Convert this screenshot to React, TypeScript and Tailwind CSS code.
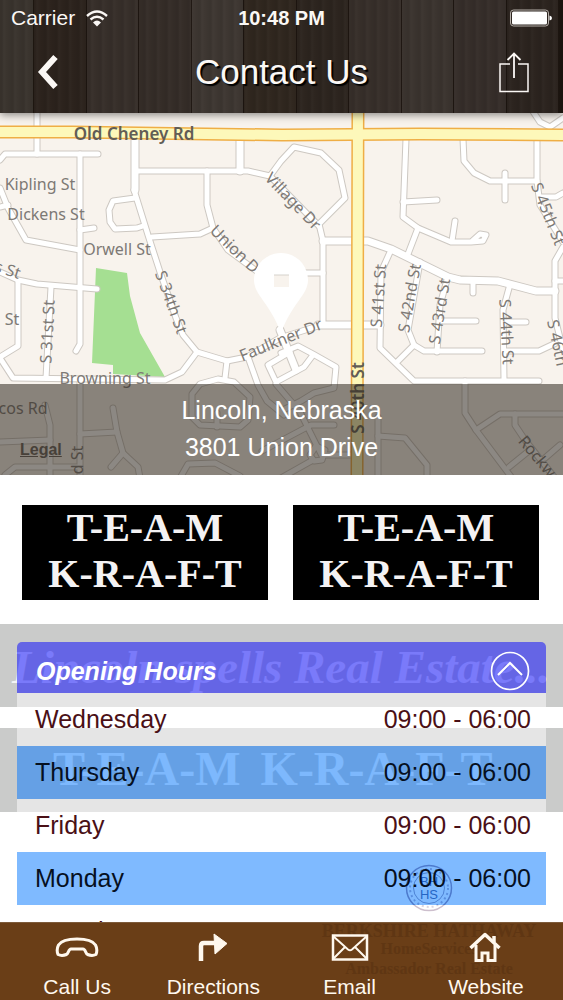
import { useState } from "react";

const planks = [
  "bg-[#2c231d]",
  "bg-[#372f2a]",
  "bg-[#352d28]",
  "bg-[#3e3732]",
  "bg-[#30271f]",
  "bg-[#2d251f]",
  "bg-[#372f2a]",
  "bg-[#3b342f]",
  "bg-[#362e2a]",
  "bg-[#2c241f]",
];

const hours = [
  { day: "Wednesday", time: "09:00 - 06:00" },
  { day: "Thursday", time: "09:00 - 06:00" },
  { day: "Friday", time: "09:00 - 06:00" },
  { day: "Monday", time: "09:00 - 06:00" },
  { day: "Tuesday", time: "09:00 - 06:00" },
];

const streets = [
  "M37 113V154",
  "M0 160L5 154H98",
  "M80 154V344L76 351",
  "M0 188L8 208L26 240L80 250",
  "M0 207L8 205",
  "M80 230L94 228",
  "M0 272L18 280L37 284L97 289",
  "M18 281V346L0 357",
  "M0 358L13 378L165 380L182 372L197 352",
  "M51 287L46 378",
  "M134 190L148 235L160 272L176 318L183 335L197 352L227 361L247 357L280 338L318 326",
  "M135 198L113 201L109 210L110 222L115 229L137 228L143 226",
  "M152 237L200 234L213 228L207 205V171",
  "M136 171H248L270 176L281 161L294 147L321 153L339 170L345 198L319 224L323 241",
  "M270 176L319 226",
  "M213 228L228 250L258 272",
  "M323 241V325",
  "M300 273H323",
  "M403 202L437 200",
  "M406 139L403 217L418 228L451 242H471L480 234L486 235L483 241L471 242",
  "M418 228L408 254",
  "M455 221L452 241",
  "M463 139L464 161L474 173L490 181H537",
  "M505 173V200",
  "M537 139V181L540 205L563 242",
  "M540 197H556L563 193",
  "M532 110L540 122L550 127L563 118",
  "M563 247L555 261V318L563 350",
  "M555 281H563",
  "M391 250L381 272L380 348L414 381H539",
  "M397 362L414 345",
  "M420 262L408 330L414 345L424 351H482",
  "M447 280L440 305L437 352",
  "M443 321H476",
  "M473 281V293",
  "M509 288L503 310L504 380",
  "M505 322H526",
  "M505 351H539L556 343",
  "M281 353L298 346L313 354L336 367L334 388L314 393L301 401L281 411",
  "M313 355L304 367L276 382L268 365L290 352",
  "M248 357L258 385L267 401L284 415",
  "M276 384L300 412L322 456",
  "M227 361L225 378",
  "M200 384L218 379L234 382L250 397L248 420L240 427L200 425L192 417V394Z",
  "M217 413V427",
  "M80 380V475",
  "M80 434L117 432",
  "M113 408L117 432L123 453L138 467L140 478",
  "M123 453L111 467",
  "M45 405L50 425V475",
  "M0 442L50 440",
  "M5 475L15 467H77",
  "M180 478L188 464L215 463L240 476",
  "M378 417V478",
  "M378 436L405 438L427 465V478",
  "M465 381V413L476 430L512 478",
  "M476 430L500 414H563",
  "M515 414V425L525 440L555 478",
  "M509 467L530 450",
  "M545 458L560 445",
  "M262 451L311 425H334",
  "M281 478L313 460",
  "M310 455L316 446L325 450L322 460L314 461Z",
  "M325 455H352",
];

const wideStreets = [
  "M135 136V190",
  "M240 139V171",
  "M323 241H368L391 249L448 277L460 280L498 281L536 291H555",
  "M318 325H380",
  "M280 330L296 370",
];

type Label = { t: string; x: number; y: number; r?: number; s: number; b?: boolean };

const labels: Label[] = [
  { t: "Old Cheney Rd", x: 134, y: 140, s: 17, b: true },
  { t: "Kipling St", x: 40, y: 190, s: 16 },
  { t: "Dickens St", x: 46, y: 220, s: 16 },
  { t: "Orwell St", x: 117, y: 255, s: 16 },
  { t: "s St", x: 6, y: 275, r: 18, s: 16 },
  { t: "St", x: 12, y: 325, s: 16 },
  { t: "S 31st St", x: 53, y: 332, r: -87, s: 16 },
  { t: "S 34th St", x: 166, y: 304, r: 70, s: 16 },
  { t: "Village Dr", x: 289, y: 205, r: 46, s: 16 },
  { t: "Union D", x: 231, y: 253, r: 44, s: 16 },
  { t: "Faulkner Dr", x: 283, y: 345, r: -22, s: 16 },
  { t: "Browning St", x: 105, y: 384, s: 16 },
  { t: "S 41st St", x: 384, y: 296, r: -86, s: 16 },
  { t: "S 42nd St", x: 415, y: 299, r: -80, s: 16 },
  { t: "S 43rd St", x: 445, y: 312, r: -81, s: 16 },
  { t: "S 44th St", x: 501, y: 332, r: 87, s: 16 },
  { t: "S 45th St", x: 543, y: 216, r: 68, s: 16 },
  { t: "S 46th", x: 552, y: 344, r: 78, s: 16 },
  { t: "S 40th St", x: 364, y: 398, r: -90, s: 17, b: true },
  { t: "cos Rd", x: 23, y: 414, s: 16 },
  { t: "d St", x: 83, y: 460, r: -90, s: 16 },
  { t: "Rockw", x: 533, y: 460, r: 50, s: 16 },
];

function AreaMap() {
  return (
    <svg
      viewBox="0 113 563 362"
      preserveAspectRatio="xMidYMid slice"
      className="block h-[362px] w-full bg-[#f8f3ed]"
      role="img"
      aria-label="Street map"
    >
      <path d="M96 268L127 273L130 296L140 333L165 377L113 374V365L92 363Z" fill="#a5df92" />
      <g fill="none" strokeLinecap="round" strokeLinejoin="round">
        <g stroke="#cdc8c2" strokeWidth="7">
          {streets.map((d) => (
            <path key={d} d={d} />
          ))}
        </g>
        <g stroke="#cdc8c2" strokeWidth="9">
          {wideStreets.map((d) => (
            <path key={d} d={d} />
          ))}
        </g>
        <g stroke="#ffffff" strokeWidth="5">
          {streets.map((d) => (
            <path key={d} d={d} />
          ))}
        </g>
        <g stroke="#ffffff" strokeWidth="7">
          {wideStreets.map((d) => (
            <path key={d} d={d} />
          ))}
        </g>
        <g stroke="#efae45" strokeWidth="13">
          <path d="M-9 132L72 132L282 135L420 134L575 135" />
          <path d="M358 100L357 490" />
        </g>
        <g stroke="#fdf8ba" strokeWidth="10">
          <path d="M-9 132L72 132L282 135L420 134L575 135" />
          <path d="M358 100L357 490" />
        </g>
      </g>
      <g className="font-['Noto_Sans']" textAnchor="middle" fill="#7d7975">
        {labels.map((l) => (
          <text
            key={l.t + l.x}
            x={l.x}
            y={l.y}
            fontSize={l.s}
            fontWeight={l.b ? 600 : 400}
            fill={l.b ? "#625d55" : undefined}
            transform={l.r ? `rotate(${l.r} ${l.x} ${l.y})` : undefined}
          >
            {l.t}
          </text>
        ))}
      </g>
      <path
        d="M281 253C296 253 308 265 308 280C308 295 292 303 281 333C270 303 254 295 254 280C254 265 266 253 281 253ZM274 275V287H289V275Z"
        fill="#ffffff"
        fillRule="evenodd"
      />
      <path d="M274 275H289" stroke="#d5d2cc" strokeWidth="1" />
    </svg>
  );
}

function PhoneIcon() {
  return (
    <svg viewBox="0 0 44 32" className="h-8 w-11" fill="none" stroke="currentColor" strokeWidth="3" strokeLinejoin="round">
      <path d="M22 8C31 8 38 10 40.500 14C42.500 18 42 21 41 23.500C39 24.500 35 24.500 32.500 23.500C30.500 22.500 30.500 18 28 18H16C13.500 18 13.500 22.500 11.500 23.500C9 24.500 5 24.500 3 23.500C2 21 1.500 18 3.500 14C6 10 13 8 22 8Z" />
    </svg>
  );
}

function DirectionsIcon() {
  return (
    <svg viewBox="0 0 44 32" className="h-8 w-11" fill="none">
      <path d="M10 30V15Q10 12 13 12H26" stroke="currentColor" strokeWidth="4.500" />
      <path d="M23 3L36 12.500L24 23Z" fill="currentColor" stroke="currentColor" strokeLinejoin="round" />
    </svg>
  );
}

function EmailIcon() {
  return (
    <svg viewBox="0 0 44 32" className="h-8 w-11" fill="none" stroke="currentColor" strokeWidth="2.500">
      <rect x="5" y="4.500" width="34" height="24" />
      <path d="M5 5L20 18.500Q22 20 24 18.500L39 5M5 28L17 16M39 28L27 16" strokeWidth="2" />
    </svg>
  );
}

function HomeIcon() {
  return (
    <svg viewBox="0 0 44 32" className="h-8 w-11" fill="none" stroke="currentColor" strokeWidth="3">
      <path d="M6.500 17L21 3.500L35.500 17" strokeWidth="3.500" strokeLinejoin="round" />
      <path d="M12 14V29.500H18V22H24V29.500H31V14" />
      <path d="M30 5V11" strokeWidth="3.500" />
    </svg>
  );
}

const tabs = [
  { label: "Call Us", Icon: PhoneIcon },
  { label: "Directions", Icon: DirectionsIcon },
  { label: "Email", Icon: EmailIcon },
  { label: "Website", Icon: HomeIcon },
];

function Header() {
  return (
    <header className="relative z-10 shrink-0 text-[#fbf8f5] shadow-[0_2px_8px_rgba(0,0,0,0.45)]">
      <div className="absolute inset-0 flex" aria-hidden="true">
        <div className="w-[34px] border-r border-[#1f1711] bg-[#3a342e]" />
        {planks.map((c, i) => (
          <div key={i} className={`flex-1 border-r border-[#1d1510] ${c}`} />
        ))}
        <div className="w-1 bg-[#1c1510]" />
        <div className="absolute inset-0 bg-[repeating-linear-gradient(90deg,rgba(0,0,0,0.06)_0px,rgba(0,0,0,0.06)_2px,rgba(255,255,255,0.02)_4px,rgba(0,0,0,0)_7px,rgba(0,0,0,0.05)_11px)]" />
      </div>
      <div className="relative grid h-9 grid-cols-3 items-center pr-[11px] pl-[11px] text-[21px]">
        <div className="flex items-center gap-[11px]">
          <span>Carrier</span>
          <svg viewBox="0 0 22 17" className="h-[17px] w-[22px]" fill="none" stroke="currentColor" strokeWidth="2.400">
            <path d="M1 6Q11 -3 21 6M4.500 9.500Q11 4 17.500 9.500" />
            <path d="M7 12.500Q11 8.500 15 12.500L11 16.500Z" fill="currentColor" stroke="none" />
          </svg>
        </div>
        <span className="text-center text-xl font-bold whitespace-nowrap">10:48 PM</span>
        <svg viewBox="0 0 44 18" className="h-[18px] w-11 justify-self-end" fill="none">
          <rect x="2.500" y="1" width="38" height="16" rx="3" stroke="#b5afa9" />
          <rect x="4" y="2.500" width="35" height="13" rx="1.500" fill="#ffffff" />
          <path d="M41.500 6.500Q44 7 44 9T41.500 11.500Z" fill="#ffffff" />
        </svg>
      </div>
      <div className="relative grid h-[77px] grid-cols-[1fr_auto_1fr] items-start px-8">
        <button type="button" aria-label="Back" className="mt-[17px] w-8 pl-1">
          <svg viewBox="0 0 24 38" className="h-[38px] w-6" fill="none" stroke="currentColor" strokeWidth="6">
            <path d="M19.500 4L6 19L19.500 34" />
          </svg>
        </button>
        <h1 className="mt-3 text-[35px] leading-[48px] [text-shadow:2px_2px_1px_#000]">Contact Us</h1>
        <button type="button" aria-label="Share" className="mt-4 justify-self-end">
          <svg viewBox="0 0 34 42" className="h-[42px] w-[34px]" fill="none" stroke="currentColor" strokeWidth="2">
            <path d="M13 12H3V39.500H31V12H21" strokeWidth="1.500" />
            <path d="M17 26V2M10.500 8L17 1.500L23.500 8" strokeWidth="1.800" />
          </svg>
        </button>
      </div>
    </header>
  );
}

function TeamLogo() {
  return (
    <div className="flex-1 bg-black pb-[3px] text-center font-['Liberation_Serif',serif] text-[40px] leading-[46px] font-bold whitespace-nowrap text-[#f4f2f3]">
      <div>T-E-A-M</div>
      <div>K-R-A-F-T</div>
    </div>
  );
}

function Backdrop() {
  return (
    <div className="absolute inset-0 overflow-hidden pt-[149px] font-['Liberation_Serif',serif] whitespace-nowrap text-white" aria-hidden="true">
      <div className="h-[83px] bg-[#cacbca] pl-3 text-[47px] leading-[86px] font-bold text-white/80 italic">
        Lincoln spells Real Estate...
      </div>
      <div className="mt-[21px] flex h-[84px] gap-5 bg-[#cacbca] pl-[53px] text-[48px] leading-[82px] font-bold text-white/90">
        <span>T-E-A-M</span>
        <span>K-R-A-F-T</span>
      </div>
      <svg viewBox="0 0 48 48" className="mt-[52px] mr-[110px] ml-auto h-12 w-12" fill="none">
        <circle cx="24" cy="24" r="22.500" stroke="#9a7f9a" strokeWidth="1.500" />
        <circle cx="24" cy="24" r="19" stroke="#b3a9c0" strokeWidth="2" strokeDasharray="2 3" />
        <circle cx="24" cy="24" r="15.500" stroke="#9a8fa8" />
        <g className="font-['Liberation_Sans']" fontSize="13" textAnchor="middle" fill="#4a5488">
          <text x="24" y="22">BH</text>
          <text x="24" y="35">HS</text>
        </g>
      </svg>
    </div>
  );
}

function OpeningHours() {
  const [open, setOpen] = useState(true);
  return (
    <section className="relative mt-[42px] mr-[17px] ml-[17px]">
      <div className="flex h-[51px] items-center justify-between rounded-t-[5px] bg-[#0000ff]/50 pt-1.5 pr-4 pl-[19px]">
        <h2 className="text-[25px] leading-8 font-bold text-white italic">Opening Hours</h2>
        <button type="button" aria-label="Toggle opening hours" aria-expanded={open} onClick={() => setOpen(!open)}>
          <svg viewBox="0 0 40 40" className={`h-10 w-10 ${open ? "" : "rotate-180"}`} fill="none" stroke="#ffffff" strokeWidth="2">
            <circle cx="20" cy="20" r="18.500" strokeWidth="1.700" />
            <path d="M8 24L20 12L32 24" />
          </svg>
        </button>
      </div>
      {open && (
        <table className="w-full border-collapse text-[25px] leading-8">
          <tbody>
            {hours.map((h, i) => (
              <tr
                key={h.day}
                className={i % 2 ? "h-[53px] bg-[#0075ff]/50 text-[#06101f]" : "h-[53px] bg-white/50 text-[#4a1016]"}
              >
                <th scope="row" className="p-0 pb-0.5 pl-[18px] text-left font-normal">
                  {h.day}
                </th>
                <td className="p-0 pr-[15px] pb-0.5 text-right">{h.time}</td>
              </tr>
            ))}
          </tbody>
        </table>
      )}
    </section>
  );
}

export default function App() {
  return (
    <div className="flex h-screen flex-col overflow-hidden bg-white font-['Liberation_Sans',Arial,sans-serif]">
      <Header />
      <main className="min-h-0 flex-1 overflow-y-auto [scrollbar-width:none]">
        <div className="relative">
          <AreaMap />
          <a href="#legal" className="absolute bottom-4 left-5 text-base leading-[18px] font-bold text-[#66615b] underline">
            Legal
          </a>
          <div className="pointer-events-none absolute inset-x-0 bottom-0 bg-[#2d261e]/55 pt-2 pb-[9px] text-center text-[25px] leading-[37px] text-white">
            <p>Lincoln, Nebraska</p>
            <p>3801 Union Drive</p>
          </div>
        </div>
        <div className="relative pt-[30px]">
          <Backdrop />
          <div className="relative flex gap-[25px] pr-6 pl-[22px]">
            <TeamLogo />
            <TeamLogo />
          </div>
          <OpeningHours />
        </div>
      </main>
      <nav className="relative h-[78px] shrink-0 border-t border-[#7d5a3a] bg-[#6a3e17]">
        <div
          className="absolute top-0 right-6 w-[220px] text-center font-['Liberation_Serif',serif] font-bold whitespace-nowrap text-[#5f3613]"
          aria-hidden="true"
        >
          <p className="text-lg leading-4">BERKSHIRE HATHAWAY</p>
          <p className="text-base leading-5">HomeServices</p>
          <p className="text-base leading-5">Ambassador Real Estate</p>
        </div>
        <ul className="relative grid grid-cols-4 px-[9px] pt-2 text-[#fff8ee]">
          {tabs.map(({ label, Icon }) => (
            <li key={label}>
              <a href={`#${label.toLowerCase().replace(" ", "-")}`} className="flex flex-col items-center gap-3">
                <Icon />
                <span className="text-[21px] leading-6">{label}</span>
              </a>
            </li>
          ))}
        </ul>
      </nav>
    </div>
  );
}
